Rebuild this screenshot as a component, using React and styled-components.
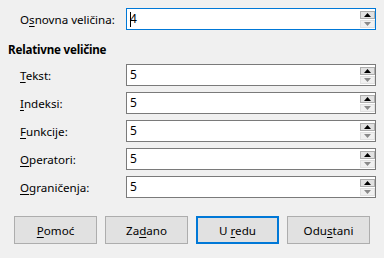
import React from 'react';
import styled, { createGlobalStyle } from 'styled-components';

const GlobalStyle = createGlobalStyle`
  html, body {
    margin: 0;
    padding: 0;
    background: #f0f0f0;
  }
  body {
    font-family: "Noto Sans", "DejaVu Sans", sans-serif;
    font-size: 11.6px;
    color: #000;
  }
`;

const Page = styled.div`
  width: 384px;
  height: 258px;
  box-sizing: border-box;
  padding: 8px 8px 0 8px;
  display: flex;
  flex-direction: column;
`;

const Row = styled.div`
  display: flex;
  align-items: center;
  height: 22px;
  padding-left: 12px;
  margin-top: ${p => p.$gap || 0}px;
`;

const Label = styled.div`
  width: 106px;
  flex: none;
  white-space: nowrap;
`;

const Key = styled.span`
  text-decoration: underline;
  text-underline-offset: 2px;
`;

const Field = styled.div`
  flex: 1;
  height: 22px;
  box-sizing: border-box;
  border: 1px solid ${p => (p.$focused ? '#0078d7' : '#7a7a7a')};
  background: #fff;
  display: flex;
  align-items: center;
  padding-left: 3px;
`;

const Value = styled.span`
  flex: 1;
  line-height: 20px;
  font-size: 12px;
`;

const Caret = styled.span`
  display: inline-block;
  width: 1px;
  height: 15px;
  background: #000;
  vertical-align: middle;
  margin-right: -1px;
`;

const Spin = styled.div`
  display: flex;
  flex-direction: column;
  gap: 1px;
`;

const SpinBtn = styled.div`
  width: 15px;
  height: 8px;
  box-sizing: border-box;
  border: 1px solid ${p => (p.$disabled ? '#e0e0e0' : '#adadad')};
  background: ${p => (p.$disabled ? '#f0f0f0' : '#e1e1e1')};
  display: flex;
  align-items: center;
  justify-content: center;
`;

const Heading = styled.div`
  font-weight: bold;
  margin-top: 12px;
  height: 16px;
  line-height: 16px;
  margin-bottom: 6px;
  letter-spacing: -0.2px;
`;

const Buttons = styled.div`
  display: flex;
  gap: 8px;
  padding-left: 6px;
  margin-top: 18px;
`;

const Button = styled.div`
  width: 83px;
  height: 28px;
  box-sizing: border-box;
  border: ${p => (p.$default ? '2px solid #0078d7' : '1px solid #adadad')};
  background: #e1e1e1;
  display: flex;
  align-items: center;
  justify-content: center;
`;

function Arrow({ up, color }) {
  return (
    <svg width="7" height="4" viewBox="0 0 7 4">
      {up ? (
        <polygon points="0,4 7,4 3.5,0" fill={color} />
      ) : (
        <polygon points="0,0 7,0 3.5,4" fill={color} />
      )}
    </svg>
  );
}

function SpinField({ value, focused }) {
  return (
    <Field $focused={focused}>
      <Value>
        {focused && <Caret />}
        {value}
      </Value>
      <Spin>
        <SpinBtn>
          <Arrow up color="#000" />
        </SpinBtn>
        <SpinBtn $disabled>
          <Arrow color="#8a8a8a" />
        </SpinBtn>
      </Spin>
    </Field>
  );
}

const sizes = [
  ['T', 'ekst:'],
  ['I', 'ndeksi:'],
  ['F', 'unkcije:'],
  ['O', 'peratori:'],
  ['O', 'graničenja:'],
];

export default function App() {
  return (
    <>
      <GlobalStyle />
      <Page>
        <Row>
          <Label>O<Key>s</Key>novna veličina:</Label>
          <SpinField value="4" focused />
        </Row>
        <Heading>Relativne veličine</Heading>
        {sizes.map(([k, rest], i) => (
          <Row key={i} $gap={i ? 6 : 0}>
            <Label><Key>{k}</Key>{rest}</Label>
            <SpinField value="5" />
          </Row>
        ))}
        <Buttons>
          <Button><span><Key>P</Key>omoć</span></Button>
          <Button><span>Za<Key>d</Key>ano</span></Button>
          <Button $default><span>U <Key>r</Key>edu</span></Button>
          <Button><span>Odu<Key>s</Key>tani</span></Button>
        </Buttons>
      </Page>
    </>
  );
}
